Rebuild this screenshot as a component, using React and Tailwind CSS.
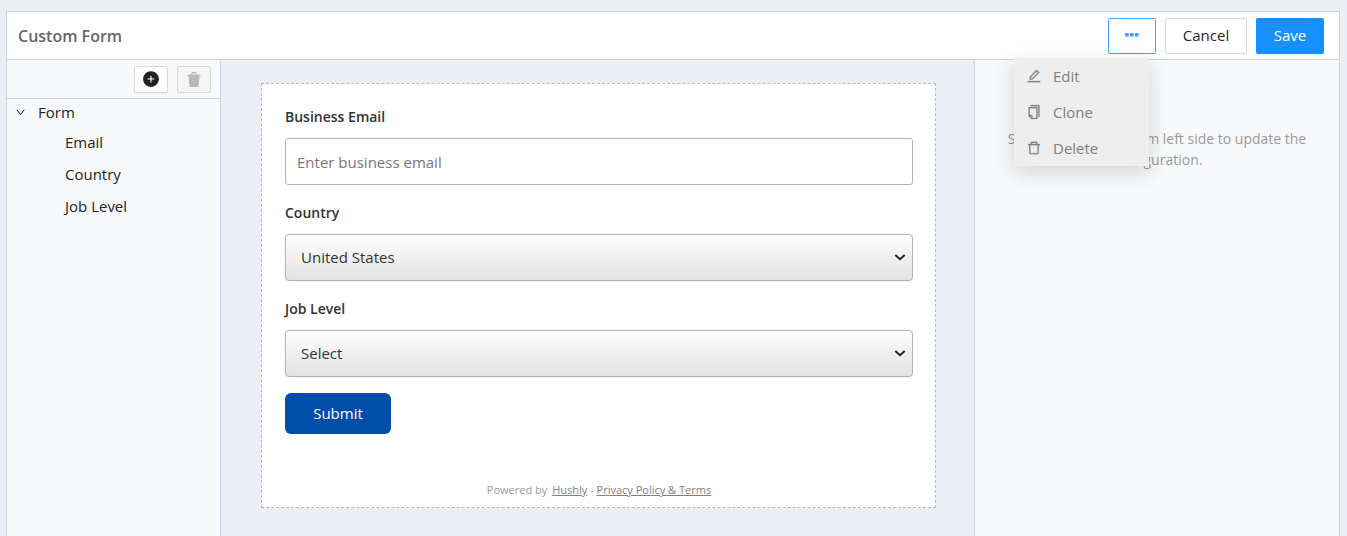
import React, { useState } from "react";
import {
  AiFillPlusCircle,
  AiOutlineCopy,
  AiOutlineDelete,
  AiOutlineDown,
  AiOutlineEdit,
} from "react-icons/ai";

const fields = ["Email", "Country", "Job Level"];

const menuItems = [
  { label: "Edit", icon: AiOutlineEdit },
  { label: "Clone", icon: AiOutlineCopy },
  { label: "Delete", icon: AiOutlineDelete },
];

const TrashIcon = () => (
  <svg width="14" height="15" viewBox="0 0 14 16" fill="currentColor" aria-hidden="true">
    <path d="M0 3h3.400l.8-1.900C4.500.4 5 0 5.600 0h2.800c.6 0 1.100.4 1.400 1.100L10.600 3H14v1.300H0zM4.900 3h4.200l-.6-1.500h-3z" />
    <path d="M1.300 4.300h11.400l-.6 10.300c-.1.800-.7 1.400-1.500 1.400H3.400c-.8 0-1.400-.6-1.500-1.400z" />
  </svg>
);

const DotsIcon = () => (
  <svg width="14" height="4" viewBox="0 0 14 4" fill="currentColor" aria-hidden="true">
    <rect x="0" y="0" width="3.800" height="3.600" rx="1" />
    <rect x="4.900" y="0" width="3.800" height="3.600" rx="1" />
    <rect x="9.800" y="0" width="3.800" height="3.600" rx="1" />
  </svg>
);

const Header = () => {
  const [open, setOpen] = useState(true);

  return (
    <header className="flex h-12 items-center justify-between border-b border-[#ccd2dc] bg-white pl-[11px] pr-[15px]">
      <h1 className="text-base font-semibold text-[#666]">Custom Form</h1>
      <div className="flex gap-[9px] text-[15px]">
        <div className="relative">
          <button
            type="button"
            aria-label="More actions"
            aria-expanded={open}
            onClick={() => setOpen(!open)}
            className="flex h-9 w-12 items-center justify-center rounded-xs border border-[#40a9ff] bg-white pb-0.5 text-[#40a0ff]"
          >
            <DotsIcon />
          </button>
          {open && (
            <ul className="absolute right-[7px] top-full z-10 mt-1 w-[135px] bg-[#eee] text-[#808080] shadow-[0_6px_20px_rgba(0,0,0,0.16)]">
              {menuItems.map(({ label, icon: Icon }) => (
                <li key={label}>
                  <button type="button" className="flex h-9 w-full items-center gap-[11px] pl-3 pt-px">
                    <Icon size={16} stroke="currentColor" strokeWidth={16} />
                    {label}
                  </button>
                </li>
              ))}
            </ul>
          )}
        </div>
        <button
          type="button"
          className="h-9 w-[82px] rounded-xs border border-[#d9d9d9] bg-white text-[#262626]"
        >
          Cancel
        </button>
        <button type="button" className="h-9 w-[68px] rounded-xs bg-[#1890ff] text-white shadow-xs">
          Save
        </button>
      </div>
    </header>
  );
};

const Sidebar = () => (
  <aside className="w-[214px] shrink-0 border-r border-[#ccd2dc] bg-[#f8f9fb]">
    <div className="flex h-[39px] items-center justify-end gap-[9px] border-b border-[#ccd2dc] pr-[9px]">
      <button
        type="button"
        aria-label="Add field"
        className="flex h-[27px] w-[34px] items-center justify-center rounded-xs border border-[#d9d9d9] bg-white text-[#222] shadow-xs"
      >
        <AiFillPlusCircle size={18} />
      </button>
      <button
        type="button"
        aria-label="Delete field"
        disabled
        className="flex h-[27px] w-[34px] items-center justify-center rounded-xs border border-[#d9d9d9] bg-[#f5f5f5] text-[#b8b8b8]"
      >
        <TrashIcon />
      </button>
    </div>
    <nav className="text-[15px] text-[#222]">
      <button type="button" className="flex h-[27px] items-center gap-3 pl-2">
        <AiOutlineDown size={11} />
        Form
      </button>
      <ul>
        {fields.map((f) => (
          <li key={f} className="flex h-8 items-center pl-[58px]">
            {f}
          </li>
        ))}
      </ul>
    </nav>
  </aside>
);

const Field = ({ id, label, children }) => (
  <div>
    <label htmlFor={id} className="mb-[11px] block text-sm leading-5 font-semibold text-[#333]">
      {label}
    </label>
    {children}
  </div>
);

const SelectBox = ({ id, options }) => (
  <div className="relative">
    <select
      id={id}
      className="block h-[47px] w-full appearance-none rounded border border-[#b3b3b3] bg-linear-to-b from-white to-[#e2e2e2] pl-[15px] pr-8 text-[15px] text-[#333] shadow-xs"
    >
      {options.map((o) => (
        <option key={o}>{o}</option>
      ))}
    </select>
    <svg
      className="pointer-events-none absolute right-[7px] top-5"
      width="12"
      height="7"
      viewBox="0 0 12 7"
      fill="none"
      stroke="#222"
      strokeWidth="2"
      aria-hidden="true"
    >
      <path d="M1.300 1L6 5.200 10.700 1" />
    </svg>
  </div>
);

const FormPreview = () => (
  <form
    onSubmit={(e) => e.preventDefault()}
    className="border border-dashed border-[#b8b8b8] bg-white px-[22px] pb-[9px] pl-[23px] pt-[23px]"
  >
    <div className="flex flex-col gap-[18px]">
      <Field id="email" label="Business Email">
        <input
          id="email"
          type="email"
          placeholder="Enter business email"
          className="block h-[47px] w-full rounded-[3px] border border-[#b3b3b3] bg-white px-[11px] text-[15px] placeholder:text-[#777]"
        />
      </Field>
      <Field id="country" label="Country">
        <SelectBox id="country" options={["United States"]} />
      </Field>
      <Field id="level" label="Job Level">
        <SelectBox id="level" options={["Select"]} />
      </Field>
    </div>
    <button
      type="submit"
      className="mt-4 h-[41px] w-[106px] rounded-md bg-[#004eaa] text-[15px] text-white"
    >
      Submit
    </button>
    <p className="mt-12 text-center text-[11px] leading-4 text-[#999]">
      Powered by{" "}
      <a href="#" className="ml-0.5 text-[#808080] underline">
        Hushly
      </a>{" "}
      -{" "}
      <a href="#" className="text-[#808080] underline">
        Privacy Policy &amp; Terms
      </a>
    </p>
  </form>
);

const App = () => {
  return (
    <div className="min-h-screen bg-[#ebeef3] pl-1.5 pr-[7px] pt-[11px] font-['Open_Sans','Noto_Sans',sans-serif]">
      <div className="flex min-h-[calc(100vh-11px)] flex-col border border-b-0 border-[#ccd2dc]">
        <Header />
        <div className="flex flex-1">
          <Sidebar />
          <main className="min-w-0 flex-1 pb-7 pl-10 pr-[38px] pt-[23px]">
            <FormPreview />
          </main>
          <aside className="w-[365px] shrink-0 border-l border-[#ccd2dc] bg-[#f8f9fb] px-7 pt-[68px] text-center text-sm leading-[21px] text-[#999]">
            <p>
              Select an element from left side to update the configuration.
            </p>
          </aside>
        </div>
      </div>
    </div>
  );
};

export default App;
